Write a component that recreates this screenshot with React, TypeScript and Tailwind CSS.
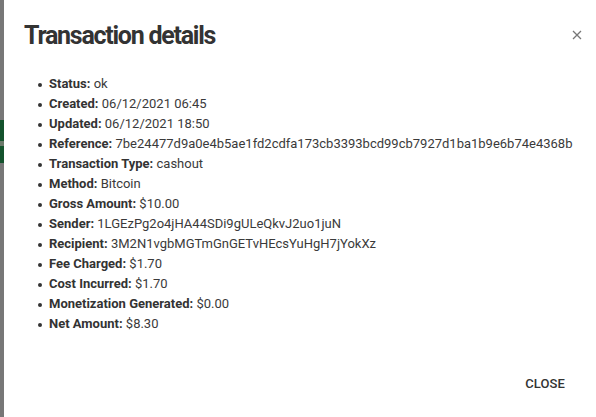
const rows: [string, string][] = [
  ['Status:', 'ok'],
  ['Created:', '06/12/2021 06:45'],
  ['Updated:', '06/12/2021 18:50'],
  ['Reference:', '7be24477d9a0e4b5ae1fd2cdfa173cb3393bcd99cb7927d1ba1b9e6b74e4368b'],
  ['Transaction Type:', 'cashout'],
  ['Method:', 'Bitcoin'],
  ['Gross Amount:', '$10.00'],
  ['Sender:', '1LGEzPg2o4jHA44SDi9gULeQkvJ2uo1juN'],
  ['Recipient:', '3M2N1vgbMGTmGnGETvHEcsYuHgH7jYokXz'],
  ['Fee Charged:', '$1.70'],
  ['Cost Incurred:', '$1.70'],
  ['Monetization Generated:', '$0.00'],
  ['Net Amount:', '$8.30'],
];

export default function App() {
  return (
    <div className="flex h-[417px] w-[596px] overflow-hidden bg-white font-['Roboto',sans-serif] text-[#333]">
      {/* backdrop strip */}
      <div className="flex w-[4px] flex-col bg-[#777]">
        <div className="h-[120px]" />
        <div className="h-[21px] bg-[#14532d]" />
        <div className="h-[5px] bg-[#6b7a6b]" />
        <div className="h-[17px] bg-[#14532d]" />
      </div>

      <div className="relative flex flex-1 flex-col">
        <div className="flex items-start justify-between pl-[20px] pr-[12px] pt-[20px]">
          <h2 className="text-[25px] font-bold leading-[32px] tracking-[-1.25px]">Transaction details</h2>
          <button className="mt-[8px] text-[#777]">
            <svg width="14" height="14" viewBox="0 0 14 14" fill="none" stroke="currentColor" strokeWidth="1.3">
              <path d="M3 3l8 8M11 3l-8 8" />
            </svg>
          </button>
        </div>

        <ul className="mt-[22px] pl-[34px] text-[13px] leading-[20px] text-[#3a3a3a]">
          {rows.map(([label, value]) => (
            <li key={label} className="flex items-start">
              <span className="mr-[7px] mt-[9px] h-[4px] w-[4px] shrink-0 rounded-full bg-[#333]" />
              <span>
                <span className="font-bold text-[#333]">{label}</span> {value}
              </span>
            </li>
          ))}
        </ul>

        <div className="mt-auto flex justify-end pb-[15px] pr-[23px]">
          <button className="px-[8px] py-[6px] text-[13px] font-medium uppercase leading-[24px] tracking-[0.1px] text-[#333]">
            Close
          </button>
        </div>
      </div>
    </div>
  );
}
